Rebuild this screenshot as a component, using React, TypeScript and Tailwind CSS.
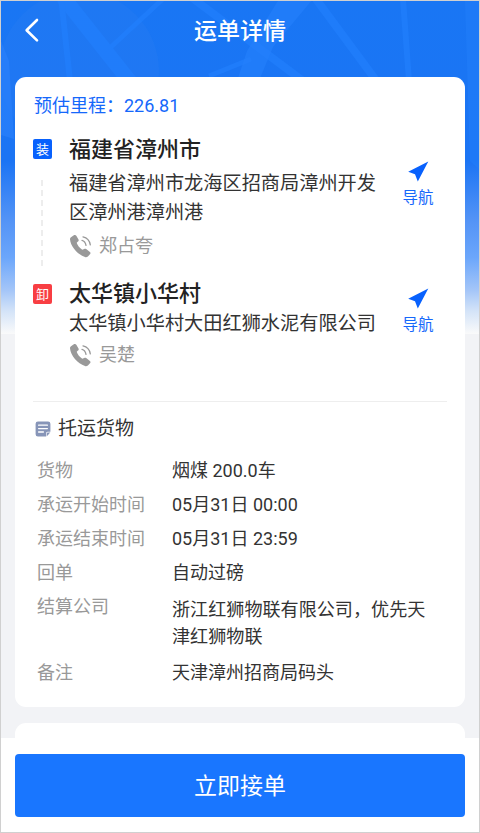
import React from 'react';

function HeroBackground() {
  return (
    <svg className="absolute left-0 top-0 h-[333px] w-[478px]" viewBox="0 0 478 333" aria-hidden="true">
      <defs>
        <linearGradient id="sky" x1="0" y1="0" x2="0" y2="1">
          <stop offset="0" stopColor="#1976f4" />
          <stop offset="0.48" stopColor="#1b74f4" />
          <stop offset="0.56" stopColor="#3482f5" />
          <stop offset="0.66" stopColor="#5494f6" />
          <stop offset="0.77" stopColor="#6ba6fb" />
          <stop offset="0.87" stopColor="#a5c6f8" />
          <stop offset="0.93" stopColor="#d3e3f8" />
          <stop offset="1" stopColor="#fafafa" />
        </linearGradient>
      </defs>
      <rect width="478" height="333" fill="url(#sky)" />
      <circle cx="78" cy="70" r="80" fill="#3a83f0" opacity="0.18" />
      <path d="M0 40L8 60L13 138L0 134Z" fill="#2a80fb" opacity="0.7" />
      <path d="M464 -2L469 160L478 168V-2Z" fill="#2480fb" opacity="0.45" />
      <g stroke="#2280fe" fill="none" opacity="0.65">
        <path d="M62 -4L130 82" strokeWidth="15" />
        <path d="M60 -4L69 80" strokeWidth="6" />
        <path d="M110 46L164 -4" strokeWidth="5" />
        <path d="M208 75L250 58" strokeWidth="5" />
        <path d="M190 -4L302 80" strokeWidth="8" />
        <path d="M315 -2L377 82" strokeWidth="8" />
        <path d="M402 -2L408 80" strokeWidth="6" />
      </g>
      <path d="M278 -2H312L272 46L258 80H236L246 50Z" fill="#2480fb" opacity="0.6" />
    </svg>
  );
}

function PhoneIcon() {
  return (
    <svg className="h-6 w-6 shrink-0" viewBox="0 0 24 24" fill="none" aria-hidden="true">
      <path
        d="M2 3.2L5.2 1.1C6 .7 6.8.9 7.3 1.7L9.5 5.4C9.9 6.2 9.7 7 9 7.5L7.7 8.8C8.6 11.6 10.7 14 13.3 15.8L15.2 14.9C15.9 14.6 16.6 14.7 17.2 15.1L20.9 17.9C21.6 18.5 21.7 19.3 21.2 20L18.9 22.4C18 23.2 17 23.4 16 23C8.6 20.6 1.6 12.6 1 5.3C.9 4.4 1.3 3.7 2 3.2Z"
        fill="#999"
      />
      <path d="M13 6.3Q16.2 7 17 11.3M14 2.8Q20.3 4.2 21.3 10.8" stroke="#999" strokeWidth="1.3" strokeLinecap="round" />
    </svg>
  );
}

function Navigate() {
  return (
    <button className="flex w-[46px] shrink-0 flex-col items-center text-[15.5px] leading-[22px] text-[#1568fb]">
      <svg className="h-[21px] w-[21px]" viewBox="0 0 21 21" aria-hidden="true">
        <path d="M20.3 .5L.2 10.8L7 13.3L9.8 20.4Z" fill="#0861fd" />
      </svg>
      <span className="mt-[5px]">导航</span>
    </button>
  );
}

function Contact({ name }: { name: string }) {
  return (
    <div className="flex h-6 items-center gap-[6px] text-lg leading-6 text-[#999]">
      <PhoneIcon />
      <span>{name}</span>
    </div>
  );
}

function Row({ label, children, className = 'h-[34px]' }: { label: string; children: React.ReactNode; className?: string }) {
  return (
    <div className={`flex ${className}`}>
      <dt className="w-[135px] shrink-0 text-[#999]">{label}</dt>
      <dd className="w-[264px]">{children}</dd>
    </div>
  );
}

export default function App() {
  return (
    <main className="relative flex h-[833px] w-[480px] flex-col overflow-hidden border border-[#d0d0d0] bg-[#f2f3f6] font-['Roboto','Noto_Sans_CJK_SC',sans-serif] text-[#333]">
      <HeroBackground />
      <header className="relative flex h-[76px] shrink-0 items-start justify-center pt-[13px]">
        <button className="absolute left-[22px] top-[15px]" aria-label="返回">
          <svg className="h-[28px] w-[18px]" viewBox="0 0 18 28" fill="none" aria-hidden="true">
            <path d="M14 4L3.6 14.2L14 24.4" stroke="white" strokeWidth="2.6" strokeLinecap="round" strokeLinejoin="round" />
          </svg>
        </button>
        <h1 className="text-[23px] font-medium leading-9 text-white">运单详情</h1>
      </header>

      <section className="relative mx-[14px] h-[630px] shrink-0 rounded-[11px] bg-white px-[18px] pt-[17px]">
        <div className="flex h-6 items-center pl-px text-lg text-[#1568fb]">预估里程：226.81</div>

        <div className="mt-[16px] flex h-[144px]">
          <div className="flex w-9 shrink-0 flex-col">
            <span className="mt-[5px] flex h-[20px] w-[19px] items-center justify-center rounded-[2px] bg-[#0861fd] text-[13px] leading-none text-white">装</span>
            <span className="ml-2 mt-[21px] h-[86px] w-0.5 bg-[repeating-linear-gradient(to_bottom,#ededed_0,#ededed_6px,transparent_6px,transparent_10px)]" />
          </div>
          <div className="w-[322px] shrink-0">
            <h2 className="pt-px text-[22px] font-medium leading-[30px] text-[#222]">福建省漳州市</h2>
            <p className="mt-1 w-[310px] text-[19.2px] leading-[29px]">福建省漳州市龙海区招商局漳州开发区漳州港漳州港</p>
            <div className="mt-[7px]"><Contact name="郑占夸" /></div>
          </div>
          <div className="ml-[4px] mt-[27px]"><Navigate /></div>
        </div>

        <div className="flex h-[122px]">
          <span className="mr-[17px] mt-[6px] flex h-[20px] w-[19px] shrink-0 items-center justify-center rounded-[2px] bg-[#f83e43] text-[13px] leading-none text-white">卸</span>
          <div className="w-[322px] shrink-0">
            <h2 className="pt-px text-[22px] font-medium leading-[30px] text-[#222]">太华镇小华村</h2>
            <p className="text-[19.2px] leading-[29px]">太华镇小华村大田红狮水泥有限公司</p>
            <div className="mt-[5px]"><Contact name="吴楚" /></div>
          </div>
          <div className="ml-[4px] mt-[10px]"><Navigate /></div>
        </div>

        <div className="mt-px h-px bg-[#eeeeee]" />

        <div className="mt-[13px] flex h-[28px] items-center gap-2 pl-[2px] text-[19px]">
          <svg className="h-4 w-4" viewBox="0 0 16 16" aria-hidden="true">
            <path d="M3 .4H13A2.4 2.4 0 0 1 15.4 2.8V10.8H12.6Q11 10.8 11 12.4V15.6H3A2.4 2.4 0 0 1 .6 13.2V2.8A2.4 2.4 0 0 1 3 .4Z" fill="#8795b8" />
            <path d="M3.6 4.2H12.4M3.6 7.6H12.4M3.6 11H8.4" stroke="white" strokeWidth="1.3" strokeLinecap="round" />
            <path d="M11.6 15.4V12.8Q11.6 11.4 13 11.4H15.3Z" fill="#8795b8" />
          </svg>
          <h3 className="-ml-px">托运货物</h3>
        </div>

        <dl className="mt-[14px] pl-1 text-lg leading-[27px]">
          <Row label="货物">烟煤 200.0车</Row>
          <Row label="承运开始时间">05月31日 00:00</Row>
          <Row label="承运结束时间">05月31日 23:59</Row>
          <Row label="回单">自动过磅</Row>
          <Row label="结算公司" className="h-[66px]">
            <span className="block w-[264px] pt-[3px] text-[18.1px]">浙江红狮物联有限公司，优先天津红狮物联</span>
          </Row>
          <Row label="备注">天津漳州招商局码头</Row>
        </dl>
      </section>

      <section className="relative mx-[14px] mt-4 h-[15px] shrink-0 rounded-t-[11px] bg-white" />

      <footer className="relative flex-1 bg-white px-[14px] pt-4">
        <button className="flex h-[63px] w-full items-center justify-center rounded-[4px] bg-[#1976ff] pt-[3px] text-[23px] text-white">立即接单</button>
      </footer>
    </main>
  );
}
